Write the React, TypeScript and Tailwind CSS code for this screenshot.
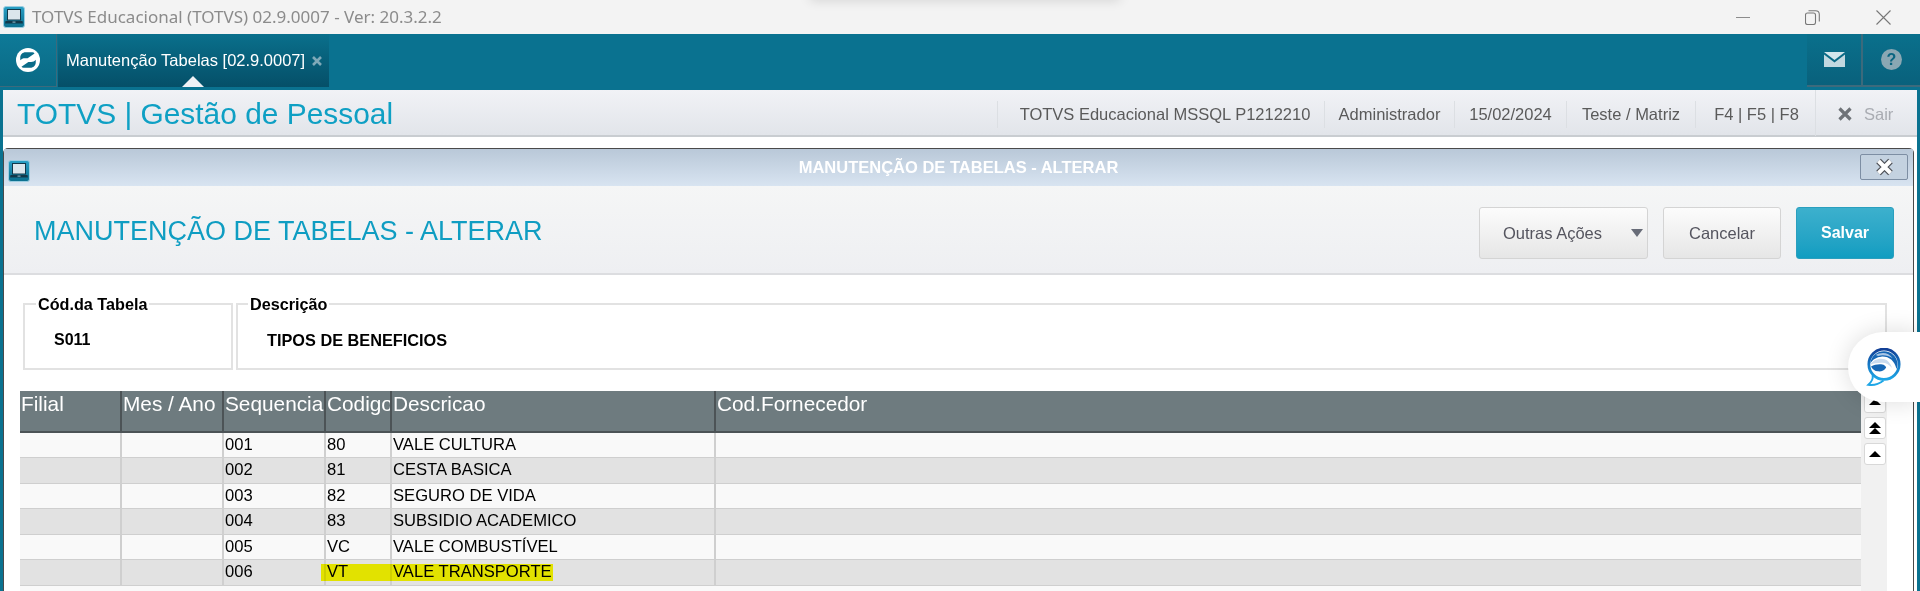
const font = { fontFamily: '"Liberation Sans", Arial, sans-serif' };

const columns = ["Filial", "Mes / Ano", "Sequencia", "Codigo", "Descricao", "Cod.Fornecedor"];

const rows = [
  { seq: "001", code: "80", desc: "VALE CULTURA", h: "h-[25px]", bg: "bg-[#f9f9f9]" },
  { seq: "002", code: "81", desc: "CESTA BASICA", h: "h-[26px]", bg: "bg-[#e2e2e2]" },
  { seq: "003", code: "82", desc: "SEGURO DE VIDA", h: "h-[25px]", bg: "bg-[#f9f9f9]" },
  { seq: "004", code: "83", desc: "SUBSIDIO ACADEMICO", h: "h-[26px]", bg: "bg-[#e2e2e2]" },
  { seq: "005", code: "VC", desc: "VALE COMBUSTÍVEL", h: "h-[25px]", bg: "bg-[#f9f9f9]" },
  { seq: "006", code: "VT", desc: "VALE TRANSPORTE", h: "h-[26px]", bg: "bg-[#e2e2e2]" },
];

const infoItems = [
  { label: "TOTVS Educacional MSSQL P1212210", w: "w-[327px] pl-[8px]" },
  { label: "Administrador", w: "w-[130px]" },
  { label: "15/02/2024", w: "w-[112px]" },
  { label: "Teste / Matriz", w: "w-[129px]" },
  { label: "F4 | F5 | F8", w: "w-[120px] pl-[2px]" },
];

function LaptopIcon() {
  return (
    <svg width="22" height="22" viewBox="0 0 22 22">
      <defs>
        <linearGradient id="lap" x1="0" y1="0" x2="0" y2="1">
          <stop offset="0" stopColor="#2aa0c6" />
          <stop offset="1" stopColor="#0b6f8e" />
        </linearGradient>
      </defs>
      <rect x="0.500" y="0.500" width="21" height="21" rx="2.500" fill="url(#lap)" stroke="#9ccde0" />
      <rect x="4.500" y="3.500" width="13" height="10.500" fill="#dbe6ec" stroke="#12384a" strokeWidth="1" />
      <path d="M2.500 15h17l.5 2.500H2z" fill="#12384a" />
      <rect x="9.500" y="15.600" width="3" height="1" fill="#8fc2d6" />
    </svg>
  );
}

function TotvsLogo() {
  return (
    <svg width="24" height="24" viewBox="0 0 24 24">
      <circle cx="12" cy="12" r="12" fill="#fff" />
      <g transform="translate(12 12) scale(1.25) translate(-12 -12)">
        <path d="M5.800 12.200V10c0-2.400 2-4.200 4.200-4.200h5.500c.8 0 1.300.3 1.700.9l-5.500 3.800H9.500c-1.500 0-2.700.5-3.700 1.700z" fill="#0a6c89" />
        <path d="M18.200 11.800V14c0 2.400-2 4.200-4.200 4.200H8.500c-.8 0-1.300-.3-1.700-.9l5.500-3.800h2.200c1.500 0 2.700-.5 3.700-1.700z" fill="#0a6c89" />
      </g>
    </svg>
  );
}

function ChatLogo() {
  return (
    <svg width="36" height="40" viewBox="0 0 33 37">
      <defs>
        <linearGradient id="ring" x1="0" y1="0" x2="0" y2="1">
          <stop offset="0" stopColor="#123f96" />
          <stop offset="0.500" stopColor="#1577c4" />
          <stop offset="1" stopColor="#1ea6e6" />
        </linearGradient>
      </defs>
      <path d="M6 25c.5 3-.5 6-4 9 5 .8 10-.8 14-4" fill="#fff" stroke="#1ea6e6" strokeWidth="1.800" />
      <circle cx="16.500" cy="15" r="14" fill="#fff" stroke="url(#ring)" strokeWidth="2.600" />
      <path d="M4 14C4.500 7.500 10 3 16.500 3S29 8 29 15c0 1.500-.3 3-1 4.500C26.500 12 21 7.500 14 8c-4 .3-8 2.500-10 6z" fill="#1767b5" />
      <path d="M9 6.500c5-3 12-2.500 15.500 3C21 7 15 6 11 7.500z" fill="#a9c6e6" />
      <path d="M4 15.500C6 11 12 9 17 10.500c3 1 5.500 3.500 7 8-3-3.500-6-5-10-4.800-4 .2-7 .6-10 1.800z" fill="#c9dbef" />
      <path d="M4.500 17c3-1.700 7-2.300 10.500-1.800 1.500.2 2.800 1.200 3.500 2.800-1.500 2.500-4.500 4-7.500 3.600C8 21.200 5.500 19.500 4.500 17z" fill="#1767b5" />
    </svg>
  );
}

function ScrollButton({ double }: { double?: boolean }) {
  return (
    <div className="flex h-[22px] w-[22px] flex-col items-center justify-center rounded-[3px] border border-[#d8d8d8] bg-white">
      <div className="h-0 w-0 border-x-[6px] border-b-[6px] border-x-transparent border-b-black" />
      {double && <div className="h-0 w-0 border-x-[6px] border-b-[6px] border-x-transparent border-b-black" />}
    </div>
  );
}

function Cell({ children, last }: { children?: React.ReactNode; last?: boolean }) {
  return (
    <div className={`overflow-hidden whitespace-nowrap pl-[1px] text-[16.600px] leading-[24px] text-black ${last ? "" : "border-r-2 border-[#cfcfcf]"}`}>
      {children}
    </div>
  );
}

export default function App() {
  return (
    <div className="relative h-[591px] w-[1920px] overflow-hidden bg-white" style={font}>
      {/* windows title bar */}
      <div className="flex h-[34px] items-center bg-[#f3f3f3] pl-[3px]">
        <LaptopIcon />
        <span className="ml-[7px] text-[17px] text-[#8b8b8b]" style={{ fontFamily: '"Noto Sans", sans-serif' }}>
          TOTVS Educacional (TOTVS) 02.9.0007 - Ver: 20.3.2.2
        </span>
        <div className="ml-auto flex items-center">
          <div className="mr-[55px] h-px w-[14px] bg-[#8c8c8c]" />
          <svg className="mr-[56px]" width="15" height="15" viewBox="0 0 15 15" fill="none" stroke="#777" strokeWidth="1.100">
            <rect x="0.500" y="3" width="10" height="11.500" rx="2" />
            <path d="M3.500 0.700h7c2 0 3.800 1.500 3.800 3.800v7" />
          </svg>
          <svg className="mr-[29px]" width="15" height="15" viewBox="0 0 15 15" stroke="#777" strokeWidth="1.100">
            <path d="M0.500 0.500l14 14M14.500 0.500l-14 14" />
          </svg>
        </div>
      </div>
      <div className="absolute -top-[8px] left-[810px] h-[8px] w-[310px] shadow-[0_0_12px_rgba(0,0,0,0.16)]" />

      {/* teal app bar */}
      <div className="flex h-[56px] items-start bg-[#0a7290]">
        <div className="flex h-[53px] w-[57px] items-center justify-center border-r border-b border-[#3c6a7c] bg-gradient-to-b from-[#0e7a98] to-[#0a6a85]">
          <TotvsLogo />
        </div>
        <div className="relative ml-px flex h-[53px] w-[271px] items-center bg-gradient-to-b from-[#0a708c] to-[#054f68] pl-[8px] text-[16.500px] text-white">
          Manutenção Tabelas [02.9.0007]
          <svg className="ml-[7px]" width="10" height="10" viewBox="0 0 10 10" stroke="#7fa9b8" strokeWidth="2.600">
            <path d="M1 1l8 8M9 1l-8 8" />
          </svg>
          <div className="absolute bottom-0 left-[124px] h-0 w-0 border-x-[11px] border-b-[11px] border-x-transparent border-b-[#f0f1f5]" />
        </div>
        <div className="ml-auto flex h-[53px]">
          <div className="flex h-[53px] w-[56px] items-center justify-center border-r-2 border-b-2 border-[#3c6a7c] bg-gradient-to-b from-[#0a708c] to-[#09617c]">
            <svg width="21" height="15" viewBox="0 0 21 15">
              <path d="M0 0h21L10.500 8z" fill="#d3e6ec" />
              <path d="M0 2.500l10.500 8 10.500-8V15H0z" fill="#c2d8e0" />
            </svg>
          </div>
          <div className="flex h-[53px] w-[57px] items-center justify-center border-b-2 border-[#3c6a7c] bg-gradient-to-b from-[#0a708c] to-[#09617c]">
            <div className="flex h-[21px] w-[21px] items-center justify-center rounded-full bg-[#8aa7b3] text-[16px] font-bold text-[#0a6480]">?</div>
          </div>
        </div>
      </div>

      {/* page body */}
      <div className="flex h-[501px] flex-col border-x-[3px] border-[#0a7290] bg-white">
        <div className="flex h-[47px] items-center border-b-2 border-[#c9cdd1] bg-gradient-to-b from-[#f1f2f6] to-[#e2e5ea] pl-[14px] text-[16.500px] text-[#5a5a5a]">
          <h1 className="pt-[2px] text-[29.900px] leading-none text-[#0fa0c4]">TOTVS | Gestão de Pessoal</h1>
          <div className="ml-auto flex h-[46px] items-center">
            {infoItems.map((item) => (
              <div key={item.label} className={`mt-[3px] flex h-[27px] items-center justify-center border-l border-[#dcdfe3] ${item.w}`}>
                {item.label}
              </div>
            ))}
            <div className="flex h-full w-[102px] items-center border-l border-[#dcdfe3] pl-[22px] pt-[3px]">
              <svg width="14" height="14" viewBox="0 0 14 14" stroke="#6f7378" strokeWidth="3.200">
                <path d="M1.500 1.500l11 11M12.500 1.500l-11 11" />
              </svg>
              <span className="ml-[12px] text-[#a9acb2]">Sair</span>
            </div>
          </div>
        </div>

        {/* modal window */}
        <div className="mt-[11px] mr-[3px] flex min-h-0 flex-1 flex-col rounded-t-[5px] border-x border-t border-[#4a4a4a]">
          <div className="relative flex h-[37px] items-center justify-center bg-gradient-to-b from-[#b9c8d8] to-[#d8e4f1] text-[16.500px] font-bold text-white">
            <div className="absolute left-[4px] top-[11px]">
              <LaptopIcon />
            </div>
            MANUTENÇÃO DE TABELAS - ALTERAR
            <div className="absolute right-[5px] top-[5px] flex h-[26px] w-[48px] items-center justify-center rounded-[2px] border border-[#7d8ea3] bg-[#c4d2e0]">
              <svg width="19" height="18" viewBox="0 0 19 18">
                <path d="M3.500 3l12 12M15.500 3l-12 12" stroke="#4c4f55" strokeWidth="6.400" />
                <path d="M3.500 3l12 12M15.500 3l-12 12" stroke="#fff" strokeWidth="4" />
              </svg>
            </div>
          </div>

          <div className="flex h-[89px] items-center justify-between border-b-2 border-[#dcdde0] bg-gradient-to-b from-[#f5f6f6] to-[#eeeff2] pl-[30px] pr-[19px] pt-[7px]">
            <h2 className="mb-[4px] text-[27px] leading-none text-[#0f9dc2]">MANUTENÇÃO DE TABELAS - ALTERAR</h2>
            <div className="flex gap-[15px] text-[16.500px]">
              <button className="relative h-[52px] w-[169px] rounded-[3px] border border-[#d4d4d4] bg-gradient-to-b from-[#fcfcfc] to-[#e6e6e6] pr-[22px] text-[#55555f]">
                Outras Ações
                <span className="absolute right-[4px] top-[21px] h-0 w-0 border-x-[6px] border-t-[8px] border-x-transparent border-t-[#686c78]" />
              </button>
              <button className="h-[52px] w-[118px] rounded-[3px] border border-[#d4d4d4] bg-gradient-to-b from-[#fcfcfc] to-[#e6e6e6] text-[#55555f]">
                Cancelar
              </button>
              <button className="h-[52px] w-[98px] rounded-[3px] border border-[#2a9fbe] bg-gradient-to-b from-[#3cb0cd] to-[#0f9dc1] text-[16px] font-bold text-white">
                Salvar
              </button>
            </div>
          </div>

          <div className="flex min-h-0 flex-1 flex-col pl-[16px] pr-[26px]">
            <div className="ml-[3px] mt-[20px] flex gap-[3px]">
              <fieldset className="h-[75px] w-[210px] border-2 border-[#e2e2e2]">
                <legend className="ml-[11px] px-[2px] text-[16.200px] font-bold leading-[18px] text-black">Cód.da Tabela</legend>
                <div className="pl-[29px] pt-[17px] text-[16px] font-bold leading-[20px]">S011</div>
              </fieldset>
              <fieldset className="h-[75px] flex-1 border-2 border-[#e2e2e2]">
                <legend className="ml-[10px] px-[2px] text-[16.200px] font-bold leading-[18px] text-black">Descrição</legend>
                <div className="pl-[29px] pt-[17px] text-[16.300px] font-bold leading-[20px]">TIPOS DE BENEFICIOS</div>
              </fieldset>
            </div>

            <div className="mt-[21px] flex min-h-0 flex-1">
              <div className="relative flex-1 bg-[#f9f9f9]">
                <div className="grid h-[42px] grid-cols-[102px_102px_102px_66px_324px_1fr] border-b-2 border-[#4c5356] bg-[#6e7b7f] text-[20.800px] leading-[24px] text-white">
                  {columns.map((col, i) => (
                    <div
                      key={col}
                      className={`overflow-hidden whitespace-nowrap pl-[1px] pt-[1px] ${i < columns.length - 1 ? "border-r-2 border-[#4c5356]" : ""}`}
                    >
                      {col}
                    </div>
                  ))}
                </div>
                {rows.map((row) => (
                  <div key={row.seq} className={`relative grid grid-cols-[102px_102px_102px_66px_324px_1fr] border-b border-[#cfcfcf] ${row.h} ${row.bg}`}>
                    <Cell />
                    <Cell />
                    <Cell>{row.seq}</Cell>
                    <Cell>{row.code}</Cell>
                    <Cell>{row.desc}</Cell>
                    <Cell last />
                    {row.seq === "006" && <div className="absolute left-[301px] top-[4px] z-20 h-[17px] w-[232px] bg-[#ffff00] mix-blend-multiply" />}
                  </div>
                ))}
              </div>
              <div className="flex w-[26px] flex-col gap-[4px] bg-[#f1f1f1] pl-[3px]">
                <ScrollButton />
                <ScrollButton double />
                <ScrollButton />
              </div>
            </div>
          </div>
        </div>
      </div>

      {/* floating chat */}
      <div className="absolute left-[1848px] top-[332px] flex h-[70px] w-[72px] items-start justify-start rounded-l-[36px] bg-white pl-[18px] pt-[16px] shadow-[0_0_24px_rgba(0,0,0,0.14)]">
        <ChatLogo />
      </div>
    </div>
  );
}
